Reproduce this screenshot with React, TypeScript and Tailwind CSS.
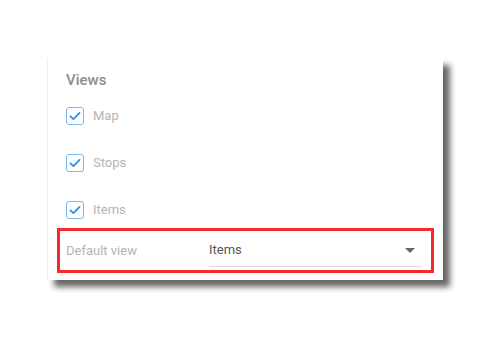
import React from 'react';

const views = ['Map', 'Stops', 'Items'];

const Check: React.FC = () => (
  <span className="flex h-[18px] w-[18px] items-center justify-center rounded-[3px] border-[1.5px] border-[#7ab8f0] bg-white">
    <svg viewBox="0 0 16 16" className="h-[14px] w-[14px]">
      <path d="M2.8 8.3l3.4 3.3L13.2 4.4" fill="none" stroke="#2e8ee8" strokeWidth="2" strokeLinecap="round" strokeLinejoin="round" />
    </svg>
  </span>
);

export default function App() {
  return (
    <div className="h-[350px] w-[500px] bg-white pl-[47px] pt-[58px] font-['Roboto',sans-serif]">
      <div className="flex h-[222px] w-[396px] flex-col border-l border-[#eeeeee] bg-white pt-[12px] pb-[6px] shadow-[7px_7px_6px_rgba(0,0,0,0.6)]">
        <h2 className="pl-[18px] text-[15px] font-medium leading-[20px] text-[#8c8c8c]">Views</h2>

        <div className="mt-[17px] flex flex-col gap-[29px] pl-[18px]">
          {views.map((v) => (
            <label key={v} className="flex h-[18px] items-center gap-[9px]">
              <Check />
              <span className="text-[13px] text-[#b4b4b4]">{v}</span>
            </label>
          ))}
        </div>

        {/* default view select */}
        <div className="mx-[9px] mt-[9px] flex h-[45px] items-center border-[3px] border-[#f5282d] pl-[6px] pr-[9px]">
          <span className="w-[143px] text-[13px] text-[#b4b4b4]">Default view</span>
          <div className="mt-[2px] flex h-[31px] flex-1 items-center justify-between border-b border-[#dcdcdc] pb-[2px]">
            <span className="text-[13px] text-[#555555]">Items</span>
            <svg viewBox="0 0 10 5" className="mr-[7px] h-[5px] w-[10px]">
              <path d="M0 0h10L5 5z" fill="#666666" />
            </svg>
          </div>
        </div>
      </div>
    </div>
  );
}
